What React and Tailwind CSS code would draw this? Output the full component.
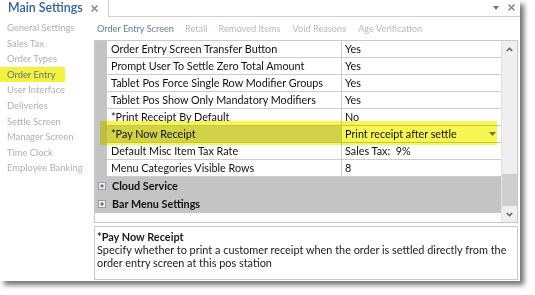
export default function App() {
  const rows = [
    ["Order Entry Screen Transfer Button", "Yes"],
    ["Prompt User To Settle Zero Total Amount", "Yes"],
    ["Tablet Pos Force Single Row Modifier Groups", "Yes"],
    ["Tablet Pos Show Only Mandatory Modifiers", "Yes"],
    ["*Print Receipt By Default", "No"],
    ["*Pay Now Receipt", "Print receipt after settle", true],
    ["Default Misc Item Tax Rate", "Sales Tax:  9%"],
    ["Menu Categories Visible Rows", "8"],
  ];
  const nav = [
    "General Settings",
    "Sales Tax",
    "Order Types",
    "Order Entry",
    "User Interface",
    "Deliveries",
    "Settle Screen",
    "Manager Screen",
    "Time Clock",
    "Employee Banking",
  ];
  const Plus = () => (
    <svg width="8" height="8" viewBox="0 0 8 8" className="shrink-0">
      <rect x="0.5" y="0.5" width="7" height="7" fill="#f4f4f4" stroke="#9a9a9a" />
      <path d="M2 4h4M4 2v4" stroke="#3a5a8a" strokeWidth="1" />
    </svg>
  );
  return (
    <div
      className="w-[535px] h-[295px] bg-white overflow-hidden"
      style={{ fontFamily: "Lato, 'Open Sans', sans-serif" }}
    >
      <div className="relative w-[520px] h-[281px] bg-white flex flex-col shadow-[4px_4px_5px_rgba(0,0,0,0.55)]">
        {/* header */}
        <div className="h-[17px] flex shrink-0">
          <div className="w-[109px] h-full border-r border-[#cfcfcf] flex items-center">
            <span className="pl-[8px] text-[12.4px] leading-none font-semibold text-[#2f5fa7] whitespace-nowrap">
              Main Settings
            </span>
            <svg width="7" height="7" viewBox="0 0 7 7" className="ml-auto mr-[10px]">
              <path d="M0.5 0.5l6 6M6.5 0.5l-6 6" stroke="#7a7a7a" strokeWidth="1.2" />
            </svg>
          </div>
          <div className="flex-1 border-b border-[#cfcfcf] flex items-center justify-end gap-[9px] pr-[5px]">
            <svg width="6" height="4" viewBox="0 0 6 4">
              <path d="M0 0h6L3 4z" fill="#777" />
            </svg>
            <svg width="7" height="7" viewBox="0 0 7 7" className="mb-[2px]">
              <path d="M0.5 0.5l6 6M6.5 0.5l-6 6" stroke="#7a7a7a" strokeWidth="1.2" />
            </svg>
          </div>
        </div>
        {/* body */}
        <div className="flex flex-1">
          <div className="w-[94px] pt-[3px] flex flex-col shrink-0">
            {nav.map((n) =>
              n === "Order Entry" ? (
                <div
                  key={n}
                  className="w-[65px] h-[15.6px] leading-[15.6px] pl-[7px] text-[9.4px] bg-[#f3f33e] text-[#5f7390] whitespace-nowrap"
                >
                  {n}
                </div>
              ) : (
                <div
                  key={n}
                  className="h-[15.6px] leading-[15.6px] pl-[7px] text-[9.4px] text-[#b0b0b0] whitespace-nowrap"
                >
                  {n}
                </div>
              )
            )}
          </div>
          <div className="flex-1 flex flex-col pr-[2px]">
            <div className="h-[23px] flex items-center pl-[3px] text-[9.2px] whitespace-nowrap text-[#b3bbc6]">
              <span className="text-[#6a7d94]">Order Entry Screen</span>
              <span className="ml-[11px]">Retail</span>
              <span className="ml-[11px]">Removed Items</span>
              <span className="ml-[12px]">Void Reasons</span>
              <span className="ml-[12px]">Age Verification</span>
            </div>
            {/* grid */}
            <div className="relative h-[183px] border border-[#c9c9c9] flex text-[10.8px] text-[#111]">
              <div className="flex-1 flex flex-col">
                {rows.map(([k, v, sel]) => (
                  <div key={k} className="flex h-[17px]">
                    <div className="w-[12px] bg-[#c4c4c4] shrink-0" />
                    <div
                      className={
                        "w-[234px] shrink-0 border-b border-[#cdcdcd] pl-[4px] leading-[16px] whitespace-nowrap " +
                        (sel ? "bg-[#d9d9d9]" : "bg-white")
                      }
                    >
                      {k}
                    </div>
                    <div className="flex-1 border-l border-b border-[#cdcdcd] pl-[3px] leading-[16px] whitespace-pre flex items-center">
                      <span>{v}</span>
                      {sel && (
                        <svg width="7" height="4" viewBox="0 0 7 4" className="ml-auto mr-[5px]">
                          <path d="M0 0h7L3.5 4z" fill="#7d7d7d" />
                        </svg>
                      )}
                    </div>
                  </div>
                ))}
                {["Cloud Service", "Bar Menu Settings"].map((c) => (
                  <div key={c} className="h-[18px] bg-[#c4c4c4] flex items-center pl-[3px] gap-[6px] font-bold">
                    <Plus />
                    <span>{c}</span>
                  </div>
                ))}
                <div className="flex-1 bg-white" />
              </div>
              {/* scrollbar */}
              <div className="w-[16px] bg-[#efefef] border-l border-[#e2e2e2] flex flex-col shrink-0">
                <div className="h-[16px] flex items-center justify-center">
                  <svg width="7" height="5" viewBox="0 0 7 5">
                    <path d="M0.8 4L3.5 1.3 6.2 4" fill="none" stroke="#606060" strokeWidth="1.5" />
                  </svg>
                </div>
                <div className="flex-1 flex flex-col">
                  <div className="mt-auto h-[32px] bg-[#cfcfcf]" />
                </div>
                <div className="h-[16px] flex items-center justify-center">
                  <svg width="7" height="5" viewBox="0 0 7 5">
                    <path d="M0.8 1L3.5 3.7 6.2 1" fill="none" stroke="#606060" strokeWidth="1.5" />
                  </svg>
                </div>
              </div>
              {/* highlighter overlay */}
              <div className="absolute left-[5px] top-[80px] w-[397px] h-[24px] bg-[#f7f754] mix-blend-multiply blur-[0.6px]" />
            </div>
            {/* description */}
            <div className="mt-[3px] h-[54px] border border-[#c9c9c9] px-[2px] pt-[3px] text-[10.9px] leading-[12.5px] text-[#1a1a1a]">
              <div className="font-bold leading-[14px]">*Pay Now Receipt</div>
              <div>
                Specify whether to print a customer receipt when the order is settled directly from the order
                entry screen at this pos station
              </div>
            </div>
          </div>
        </div>
      </div>
    </div>
  );
}
